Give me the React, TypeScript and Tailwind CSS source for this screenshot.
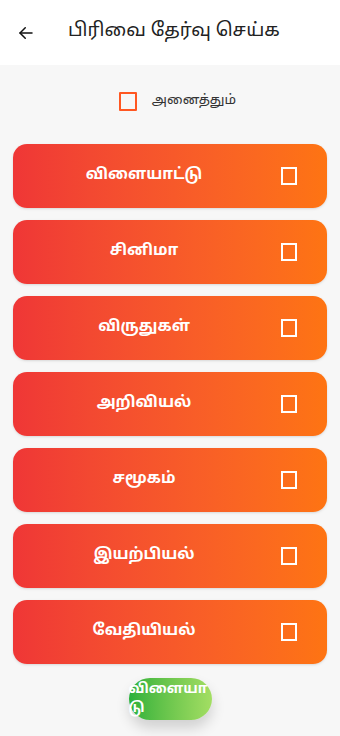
import React from "react";

const items = ["விளையாட்டு", "சினிமா", "விருதுகள்", "அறிவியல்", "சமூகம்", "இயற்பியல்", "வேதியியல்"];

export default function App() {
  const font = { fontFamily: '"Noto Sans Tamil", "Noto Sans", "Lohit Tamil", Roboto, sans-serif' };
  return (
    <div className="w-[340px] h-[736px] bg-[#f7f7f7] flex flex-col overflow-hidden" style={font}>
      <div className="h-[65px] bg-white flex items-center shrink-0">
        <svg className="ml-[17px]" width="18" height="18" viewBox="0 0 24 24" fill="none" stroke="#111" strokeWidth="2" strokeLinecap="round" strokeLinejoin="round">
          <path d="M20 12H4" />
          <path d="M11 5l-7 7 7 7" />
        </svg>
        <span className="ml-[33px] text-[18.8px] text-[#222] leading-none">பிரிவை தேர்வு செய்க</span>
      </div>
      <div className="flex items-center justify-center h-[72px] shrink-0 pl-[15px]">
        <div className="w-[18px] h-[19px] border-2 border-[#ff5722] rounded-[1px]" />
        <span className="ml-[15px] text-[13.5px] text-[#333]">அனைத்தும்</span>
      </div>
      <div className="flex flex-col gap-[12px] px-[13px] mt-[7px]">
        {items.map((t) => (
          <div key={t} className="h-[64px] rounded-[14px] bg-gradient-to-r from-[#ef3636] to-[#fe7412] flex items-center shadow-sm">
            <div className="flex-1 flex justify-center pl-[34px]">
              <span className="text-white font-bold text-[15.5px]">{t}</span>
            </div>
            <div className="w-[16px] h-[18px] border-2 border-white mr-[30px] ml-[40px]" />
          </div>
        ))}
      </div>
      <div className="flex justify-center mt-[14px]">
        <div className="w-[83px] h-[42px] rounded-full bg-gradient-to-r from-[#27b13a] to-[#a3de63] shadow-[0_8px_14px_rgba(0,0,0,0.16)] flex items-center overflow-visible">
          <span className="text-white font-bold text-[14px] leading-[19px] w-[78px] break-all">விளையாடு</span>
        </div>
      </div>
    </div>
  );
}
